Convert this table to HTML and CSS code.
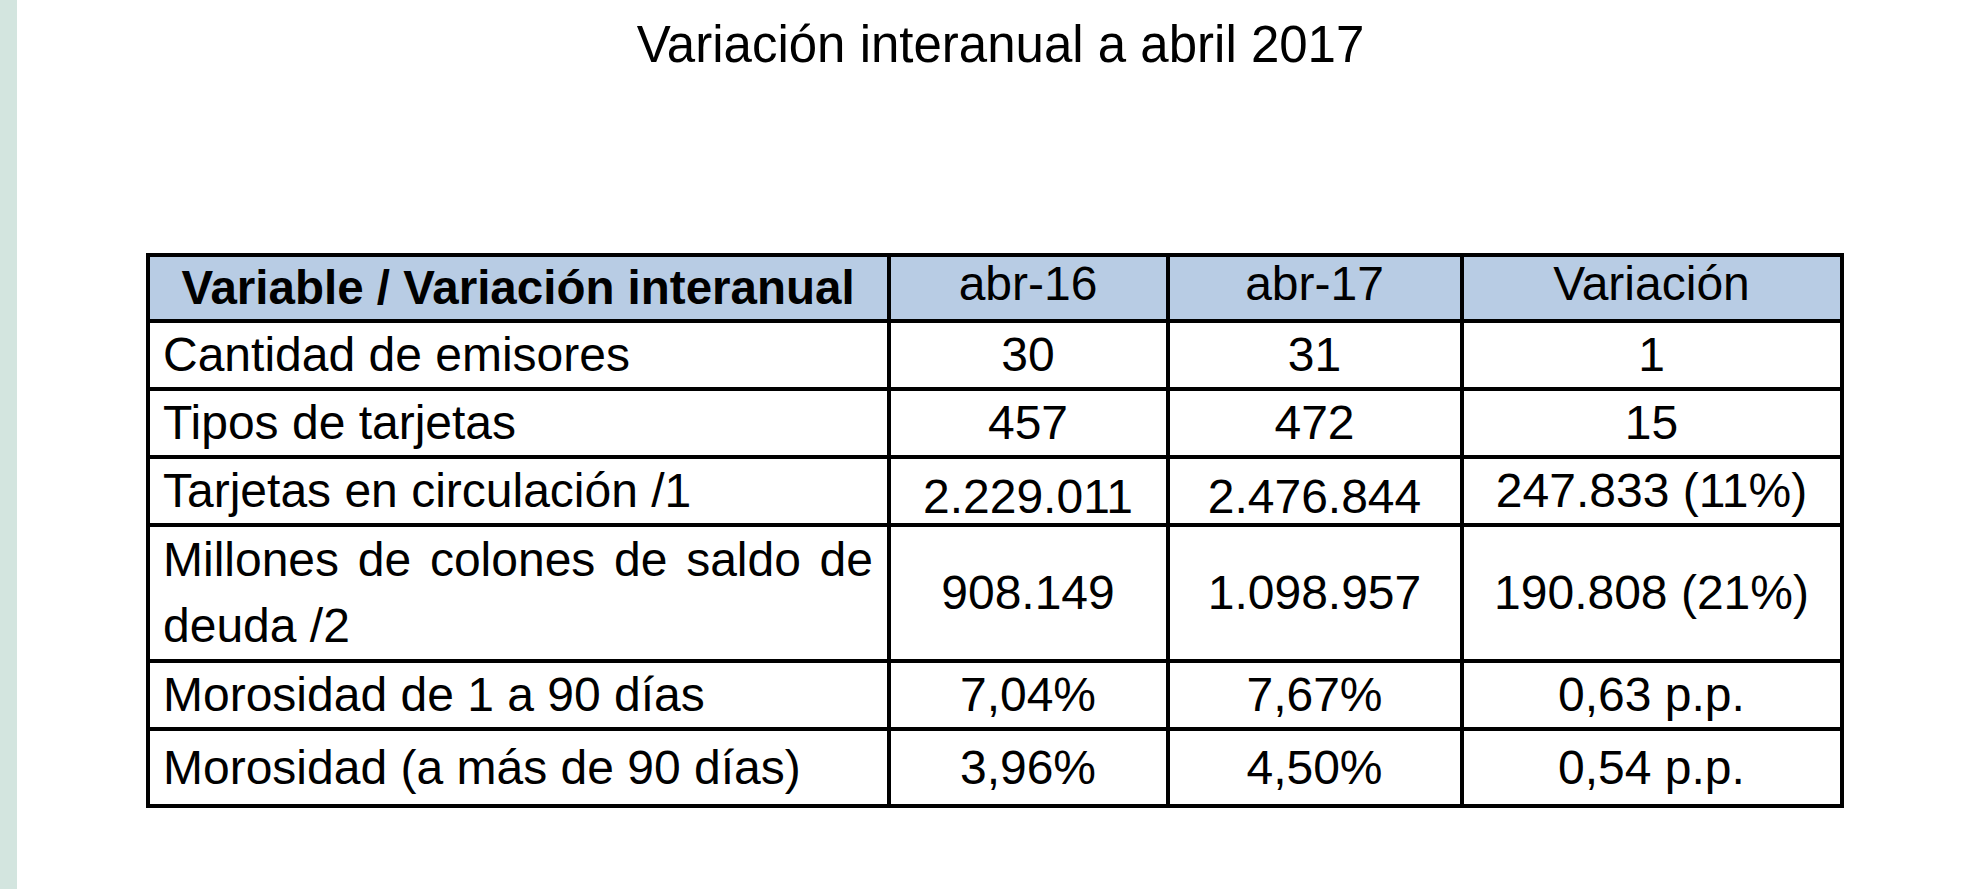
FILE: index.html
```html
<!DOCTYPE html>
<html lang="es">
<head>
<meta charset="utf-8">
<title>Variación interanual a abril 2017</title>
<link rel="stylesheet" href="styles.css">
</head>
<body>
<div class="page">
  <div class="strip"></div>
  <main class="main">
    <h1 class="title">Variación interanual a abril 2017</h1>
    <table class="data">
      <colgroup>
        <col class="c1"><col class="c2"><col class="c3"><col class="c4">
      </colgroup>
      <thead>
        <tr class="r-head">
          <th class="h-var">Variable / Variación interanual</th>
          <th class="h-num">abr-16</th>
          <th class="h-num">abr-17</th>
          <th class="h-num">Variación</th>
        </tr>
      </thead>
      <tbody>
        <tr class="r-std">
          <td class="lbl">Cantidad de emisores</td>
          <td class="num">30</td>
          <td class="num">31</td>
          <td class="num">1</td>
        </tr>
        <tr class="r-std">
          <td class="lbl">Tipos de tarjetas</td>
          <td class="num">457</td>
          <td class="num">472</td>
          <td class="num">15</td>
        </tr>
        <tr class="r-std">
          <td class="lbl">Tarjetas en circulación /1</td>
          <td class="num low">2.229.011</td>
          <td class="num low">2.476.844</td>
          <td class="num">247.833 (11%)</td>
        </tr>
        <tr class="r-double">
          <td class="lbl just">Millones de colones de saldo de deuda /2</td>
          <td class="num">908.149</td>
          <td class="num">1.098.957</td>
          <td class="num">190.808 (21%)</td>
        </tr>
        <tr class="r-std">
          <td class="lbl">Morosidad de 1 a 90 días</td>
          <td class="num">7,04%</td>
          <td class="num">7,67%</td>
          <td class="num">0,63 p.p.</td>
        </tr>
        <tr class="r-last">
          <td class="lbl">Morosidad (a más de 90 días)</td>
          <td class="num">3,96%</td>
          <td class="num">4,50%</td>
          <td class="num">0,54 p.p.</td>
        </tr>
      </tbody>
    </table>
  </main>
</div>
</body>
</html>
```
FILE: styles.css
```css
html, body {
  margin: 0;
  padding: 0;
  background: #ffffff;
}

body {
  font-family: "Liberation Sans", Arial, sans-serif;
  color: #000000;
}

.page {
  display: flex;
  min-height: 889px;
}

.strip {
  flex: 0 0 17px;
  background: #d3e5df;
}

.main {
  flex: 1 1 auto;
  padding-left: 129px;
}

.title {
  width: 1698px;
  margin: 0;
  padding: 15px 0 0 11px;
  box-sizing: border-box;
  font-size: 51px;
  font-weight: normal;
  line-height: 60px;
  text-align: center;
}

.data {
  margin-top: 178px;
  width: 1698px;
  table-layout: fixed;
  border-collapse: collapse;
  font-size: 48px;
}

.c1 { width: 741px; }
.c2 { width: 279px; }
.c3 { width: 294px; }
.c4 { width: 380px; }

.data th,
.data td {
  border: 4px solid #000000;
  padding: 0 14px 0 13px;
  line-height: 48px;
  vertical-align: middle;
  white-space: nowrap;
}

.r-head { height: 66px; }
.r-std { height: 68px; }
.r-double { height: 133px; }
.r-last { height: 77px; }

.data thead th {
  background: #b8cce4;
  text-align: center;
}

.data .h-var {
  font-size: 47.5px;
  font-weight: bold;
}

.data .h-num {
  font-weight: normal;
  padding-bottom: 9px;
}

.data .lbl {
  text-align: left;
}

.data td.just {
  white-space: normal;
  text-align: justify;
  line-height: 66px;
}

.data .num {
  text-align: center;
}

.data td.low {
  padding-top: 12px;
}
```
